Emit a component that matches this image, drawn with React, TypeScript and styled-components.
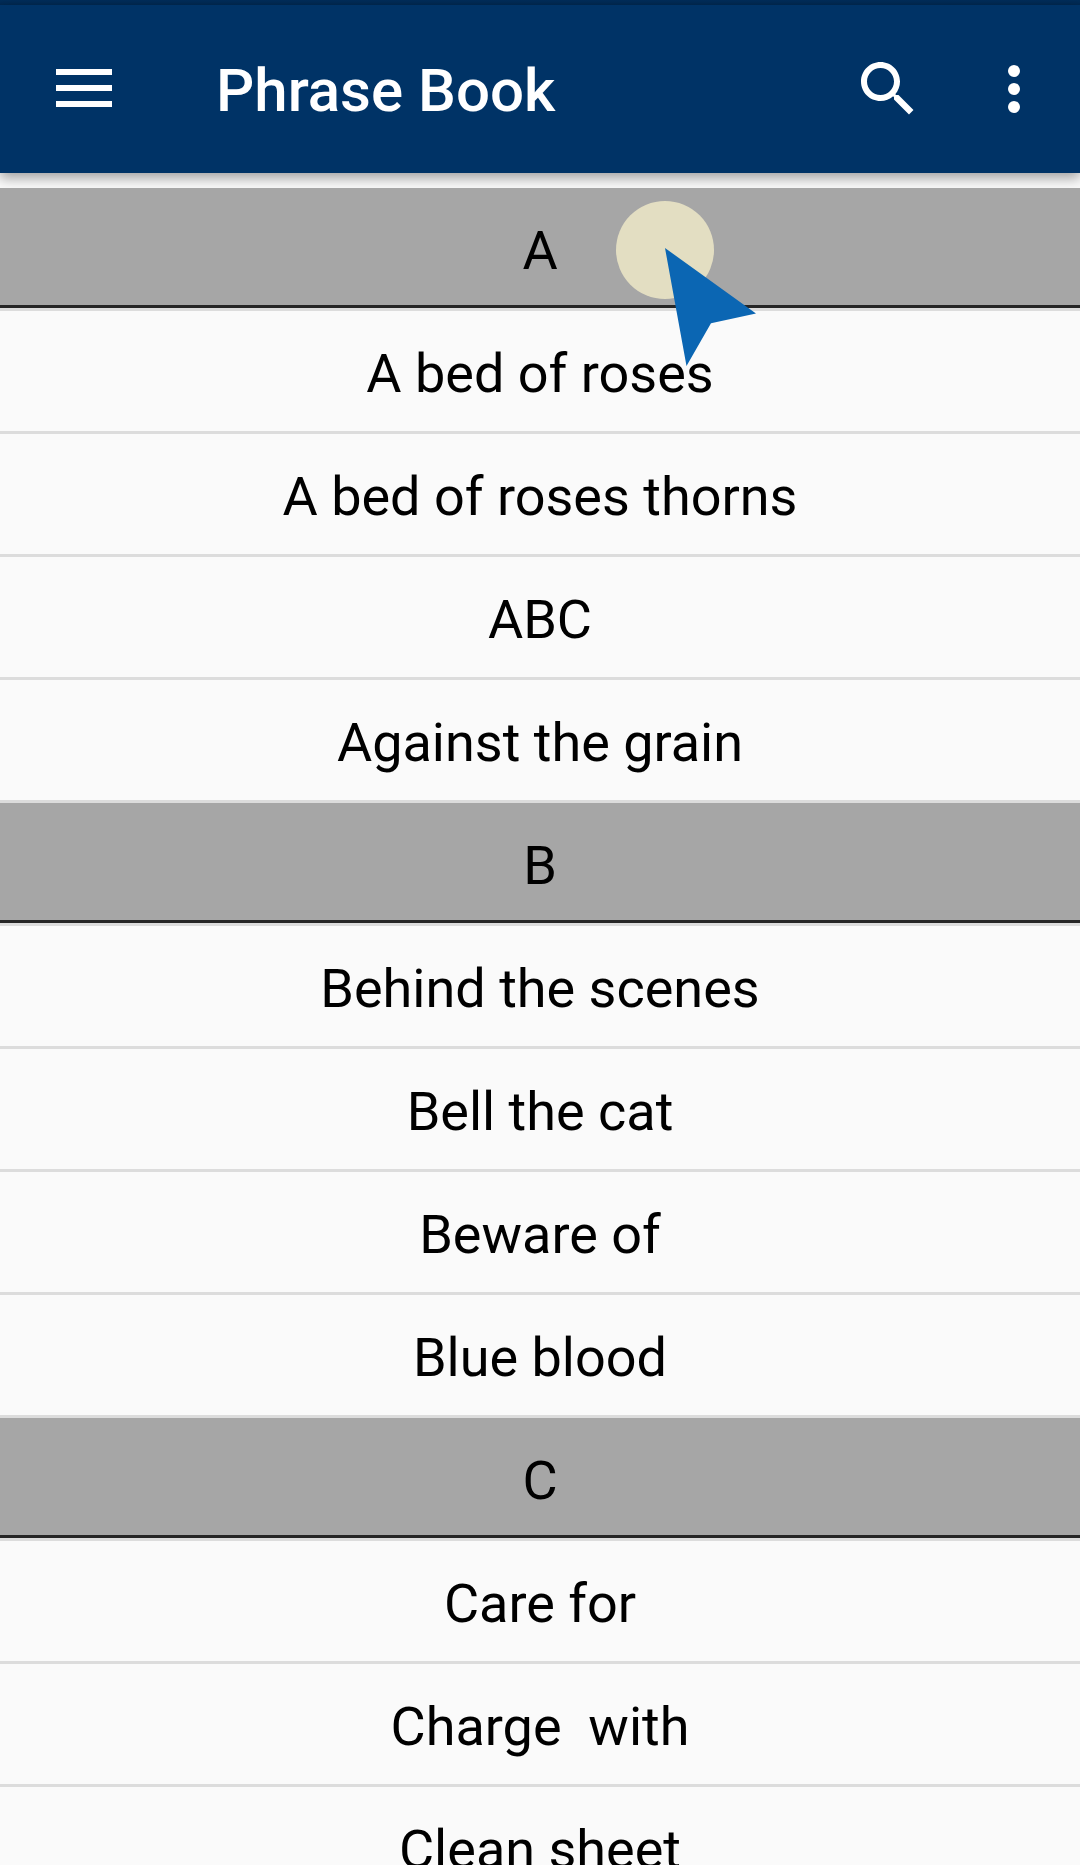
import React from "react";
import styled, { createGlobalStyle } from "styled-components";

const GlobalStyle = createGlobalStyle`
  * { box-sizing: border-box; }
  body {
    margin: 0;
    background: #fafafa;
    color: #000;
    font-family: Roboto, "Noto Sans", sans-serif;
  }
`;

const Screen = styled.div`
  position: relative;
  height: 100vh;
  display: flex;
  flex-direction: column;
  overflow: hidden;
`;

const StatusStrip = styled.div`
  flex: none;
  height: 5px;
  background: linear-gradient(#002d5a, #002850);
`;

const AppBar = styled.header`
  flex: none;
  display: flex;
  align-items: center;
  height: 168px;
  padding: 0 30px 0 56px;
  background: #003366;
  color: #fff;
  box-shadow: 0 5px 12px rgba(0, 0, 0, 0.36);
`;

const Title = styled.h1`
  flex: 1;
  margin: 0 0 0 104px;
  padding-top: 4px;
  font-size: 60px;
  line-height: 72px;
  font-weight: 500;
`;

const IconButton = styled.button`
  display: block;
  flex: none;
  padding: 0;
  border: 0;
  background: none;
  color: inherit;
  cursor: pointer;

  & + & {
    margin-left: 54px;
  }

  svg {
    display: block;
    fill: currentColor;
  }
`;

const Sections = styled.main`
  flex: 1;
  min-height: 0;
  margin-top: 15px;
  overflow: hidden;
`;

const Letter = styled.h2`
  position: relative;
  margin: 0;
  padding: 31px 0 22px;
  border-bottom: 3px solid #262626;
  box-shadow: 0 3px 0 #dcdcdc;
  background: #a6a6a6;
  font-size: 54px;
  line-height: 64px;
  font-weight: 400;
  text-align: center;
`;

const Phrases = styled.ul`
  margin: 0;
  padding: 3px 0 0;
  list-style: none;
`;

const Phrase = styled.li`
  border-bottom: 3px solid #dcdcdc;
`;

const PhraseButton = styled.button`
  display: block;
  width: 100%;
  padding: 31px 0 25px;
  border: 0;
  background: none;
  color: inherit;
  font: inherit;
  font-size: 54px;
  line-height: 64px;
  text-align: center;
  white-space: pre;
  cursor: pointer;
`;

const Pointer = styled.svg`
  position: absolute;
  z-index: 1;
  top: 13px;
  left: calc(50% + 76px);
  pointer-events: none;
`;

const sections = [
  {
    letter: "A",
    phrases: ["A bed of roses", "A bed of roses thorns", "ABC", "Against the grain"],
  },
  {
    letter: "B",
    phrases: ["Behind the scenes", "Bell the cat", "Beware of", "Blue blood"],
  },
  { letter: "C", phrases: ["Care for", "Charge  with", "Clean sheet"] },
];

function TapPointer() {
  return (
    <Pointer width="142" height="168" viewBox="0 0 142 168" aria-hidden="true">
      <circle cx="49" cy="49" r="49" fill="#e3dec2" />
      <path d="M49 47 L140 112.5 L95 122.3 L70.5 165 Z" fill="#0b66b3" />
    </Pointer>
  );
}

export default function App() {
  return (
    <>
      <GlobalStyle />
      <Screen>
        <StatusStrip />
        <AppBar>
          <IconButton aria-label="Open menu">
            <svg width="56" height="72" viewBox="0 0 56 72">
              <path d="M0 16h56v6H0zM0 32h56v6H0zM0 48h56v6H0z" />
            </svg>
          </IconButton>
          <Title>Phrase Book</Title>
          <IconButton aria-label="Search">
            <svg width="72" height="72" viewBox="0 0 24 24">
              <path d="M15.5 14h-.79l-.28-.27C15.41 12.59 16 11.11 16 9.5 16 5.91 13.09 3 9.5 3S3 5.91 3 9.5 5.91 16 9.5 16c1.61 0 3.09-.59 4.23-1.57l.27.28v.79l5 4.99L20.49 19l-4.99-5zm-6 0C7.01 14 5 11.99 5 9.5S7.01 5 9.5 5 14 7.01 14 9.5 11.99 14 9.5 14z" />
            </svg>
          </IconButton>
          <IconButton aria-label="More options">
            <svg width="72" height="72" viewBox="0 0 24 24">
              <circle cx="12" cy="6" r="2" />
              <circle cx="12" cy="12" r="2" />
              <circle cx="12" cy="18" r="2" />
            </svg>
          </IconButton>
        </AppBar>
        <Sections>
          {sections.map(({ letter, phrases }, index) => (
            <section key={letter}>
              <Letter>
                {letter}
                {index === 0 && <TapPointer />}
              </Letter>
              <Phrases>
                {phrases.map((phrase) => (
                  <Phrase key={phrase}>
                    <PhraseButton>{phrase}</PhraseButton>
                  </Phrase>
                ))}
              </Phrases>
            </section>
          ))}
        </Sections>
      </Screen>
    </>
  );
}
